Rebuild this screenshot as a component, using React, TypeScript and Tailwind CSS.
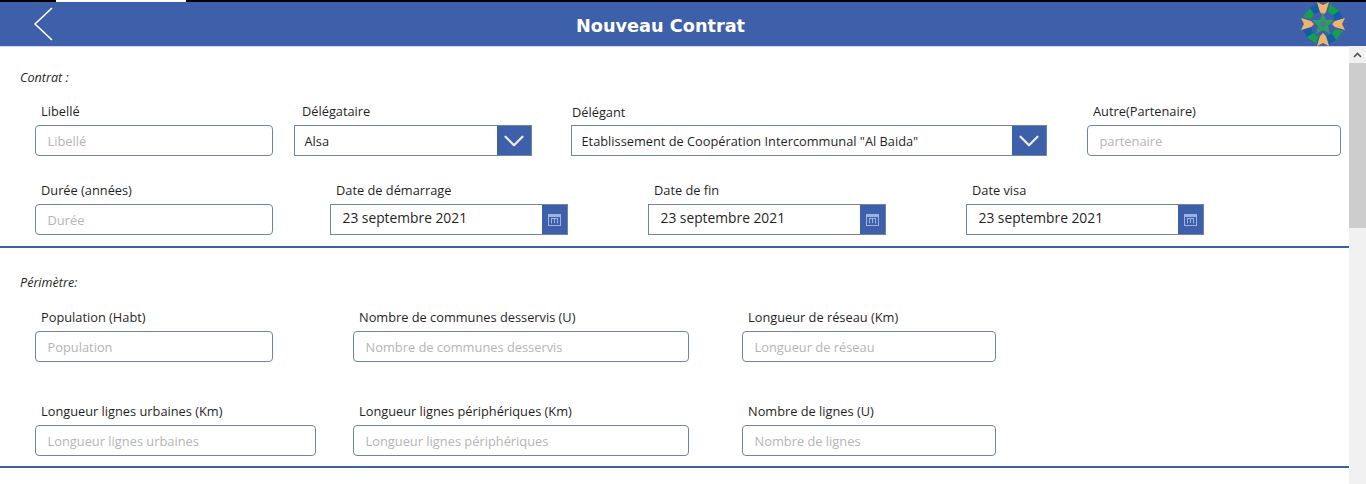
import { ChevronDown } from "lucide-react";

const fontStack = "font-['Open_Sans','Noto_Sans',sans-serif]";

const Logo = () => (
    <svg width="48" height="44" viewBox="-24 -22 48 44" className="ml-auto blur-[0.4px]">
        {[0, 90, 180, 270].map((angle) => (
            <g key={angle} transform={`rotate(${angle})`}>
                <path d="M-6 -22 L0 -19 L6 -22 L3 -12 L0 -9 L-3 -12 Z" fill="#f0b56a" />
                <path d="M-20 -7 L-13 -16 L-9 -10 L-12 -5 Z" fill="#12a24a" />
                <path d="M-13 -16 L-6 -20 L-3.5 -12 L-9 -10 Z" fill="#0f5ea8" />
            </g>
        ))}
        <path
            d="M0 -12 L3 -4 L11 -4 L5 2 L7 10 L0 6 L-7 10 L-5 2 L-11 -4 L-3 -4 Z"
            fill="#2f9a62"
        />
        <circle cx="0" cy="0" r="2.5" fill="#3f7f8f" />
    </svg>
);

const CalendarIcon = () => (
    <svg width="13" height="12" viewBox="0 0 13 12" fill="none" stroke="#9db3e0" strokeWidth="1">
        <rect x="0.5" y="0.5" width="12" height="11" />
        <rect x="0.5" y="0.5" width="12" height="2" fill="#9db3e0" />
        <path d="M3 4.5 H10 M3.5 4.5 V9.5 M6.5 4.5 V9 M9.5 4.5 V9.5" />
    </svg>
);

interface FieldProps {
    label: string;
    className: string;
    labelClassName?: string;
    children: React.ReactNode;
}

const Field = ({ label, className, labelClassName = "pl-1.5", children }: FieldProps) => (
    <div className={className}>
        <div className={`${labelClassName} h-[28px] text-[12.8px] leading-[28px] text-[#1f1f1f]`}>
            {label}
        </div>
        {children}
    </div>
);

const TextInput = ({ placeholder }: { placeholder: string }) => (
    <div className="flex h-[31px] items-center rounded-[4px] border border-[#6f83ab] bg-white pt-0.5 pl-[11.5px] text-[12.85px] text-[#b5b5b5]">
        {placeholder}
    </div>
);

const SelectInput = ({ value }: { value: string }) => (
    <div className="flex h-[31px] items-center justify-between border border-[#6f83ab] bg-white text-[12.8px] text-[#1f1f1f]">
        <span className="pt-0.5 pl-[9.5px]">{value}</span>
        <span className="flex h-full w-[34px] items-center justify-center bg-[#3e5fa9]">
            <ChevronDown size={34} strokeWidth={1.6} className="text-[#e8eefb]" />
        </span>
    </div>
);

const DateInput = ({ value }: { value: string }) => (
    <div className="flex h-[31px] items-center justify-between border border-[#6f83ab] bg-white text-[13.8px] text-[#1f1f1f]">
        <span className="pb-0.5 pl-[11.5px]">{value}</span>
        <span className="flex h-full w-[25px] items-center justify-center bg-[#3e5fa9]">
            <CalendarIcon />
        </span>
    </div>
);

const App = () => {
    return (
        <div className={`${fontStack} h-[484px] w-[1366px] overflow-hidden bg-white`}>
            <div className="flex h-[2px] bg-black">
                <div className="ml-14 h-full w-[130px] bg-white" />
            </div>
            <header className="flex h-[44px] items-center bg-[#3e5fa9] pr-[19px] pl-[31px]">
                <svg width="24" height="36" viewBox="0 0 24 36" fill="none" stroke="white" strokeWidth="1.6">
                    <path d="M21 2 L4 18 L21 34" />
                </svg>
                <h1 className="ml-[521px] pt-1 font-['DejaVu_Sans',sans-serif] text-[17.7px] font-bold text-white">
                    Nouveau Contrat
                </h1>
                <Logo />
            </header>

            <div className="flex">
                <main className="w-[1349px] border-t border-[#cfdaf0]">
                    <p className="h-[21px] pt-[21px] pl-5 text-[12.6px] leading-[20px] text-[#1f1f1f] italic">
                        Contrat :
                    </p>
                    <div className="flex pt-[29px] pl-[35px]">
                        <Field label="Libellé" className="w-[238px]">
                            <TextInput placeholder="Libellé" />
                        </Field>
                        <Field label="Délégataire" className="ml-[21px] w-[238px]" labelClassName="pl-2">
                            <SelectInput value="Alsa" />
                        </Field>
                        <Field label="Délégant" className="ml-[39px] w-[476px]" labelClassName="pl-px pt-px">
                            <SelectInput value={'Etablissement de Coopération Intercommunal "Al Baida"'} />
                        </Field>
                        <Field label="Autre(Partenaire)" className="ml-[40px] w-[254px]">
                            <TextInput placeholder="partenaire" />
                        </Field>
                    </div>
                    <div className="flex pt-[20px] pl-[35px]">
                        <Field label="Durée (années)" className="w-[238px]">
                            <TextInput placeholder="Durée" />
                        </Field>
                        <Field label="Date de démarrage" className="ml-[57px] w-[238px]">
                            <DateInput value="23 septembre 2021" />
                        </Field>
                        <Field label="Date de fin" className="ml-[80px] w-[238px]">
                            <DateInput value="23 septembre 2021" />
                        </Field>
                        <Field label="Date visa" className="ml-[80px] w-[238px]">
                            <DateInput value="23 septembre 2021" />
                        </Field>
                    </div>
                    <div className="mt-[11px] h-[2px] bg-[#3e5fa9]" />

                    <p className="h-[21px] pt-[25px] pl-5 text-[12.6px] leading-[20px] text-[#1f1f1f] italic">
                        Périmètre:
                    </p>
                    <div className="flex pt-[30px] pl-[35px]">
                        <Field label="Population (Habt)" className="w-[238px]">
                            <TextInput placeholder="Population" />
                        </Field>
                        <Field label="Nombre de communes desservis (U)" className="ml-[80px] w-[336px]">
                            <TextInput placeholder="Nombre de communes desservis" />
                        </Field>
                        <Field label="Longueur de réseau (Km)" className="ml-[53px] w-[254px]">
                            <TextInput placeholder="Longueur de réseau" />
                        </Field>
                    </div>
                    <div className="flex pt-[35px] pl-[35px]">
                        <Field label="Longueur lignes urbaines (Km)" className="w-[281px]">
                            <TextInput placeholder="Longueur lignes urbaines" />
                        </Field>
                        <Field label="Longueur lignes périphériques (Km)" className="ml-[37px] w-[336px]">
                            <TextInput placeholder="Longueur lignes périphériques" />
                        </Field>
                        <Field label="Nombre de lignes (U)" className="ml-[53px] w-[254px]">
                            <TextInput placeholder="Nombre de lignes" />
                        </Field>
                    </div>
                    <div className="mt-[10px] h-[2px] bg-[#3e5fa9]" />
                </main>

                <aside className="flex h-[438px] w-[17px] flex-col bg-[#f1f1f1]">
                    <div className="flex h-[17px] items-center justify-center">
                        <svg width="9" height="6" viewBox="0 0 9 6" fill="none" stroke="#505050" strokeWidth="1.6">
                            <path d="M1 5 L4.5 1.5 L8 5" />
                        </svg>
                    </div>
                    <div className="h-[165px] bg-[#cdcdcd]" />
                </aside>
            </div>
        </div>
    );
};

export default App;
